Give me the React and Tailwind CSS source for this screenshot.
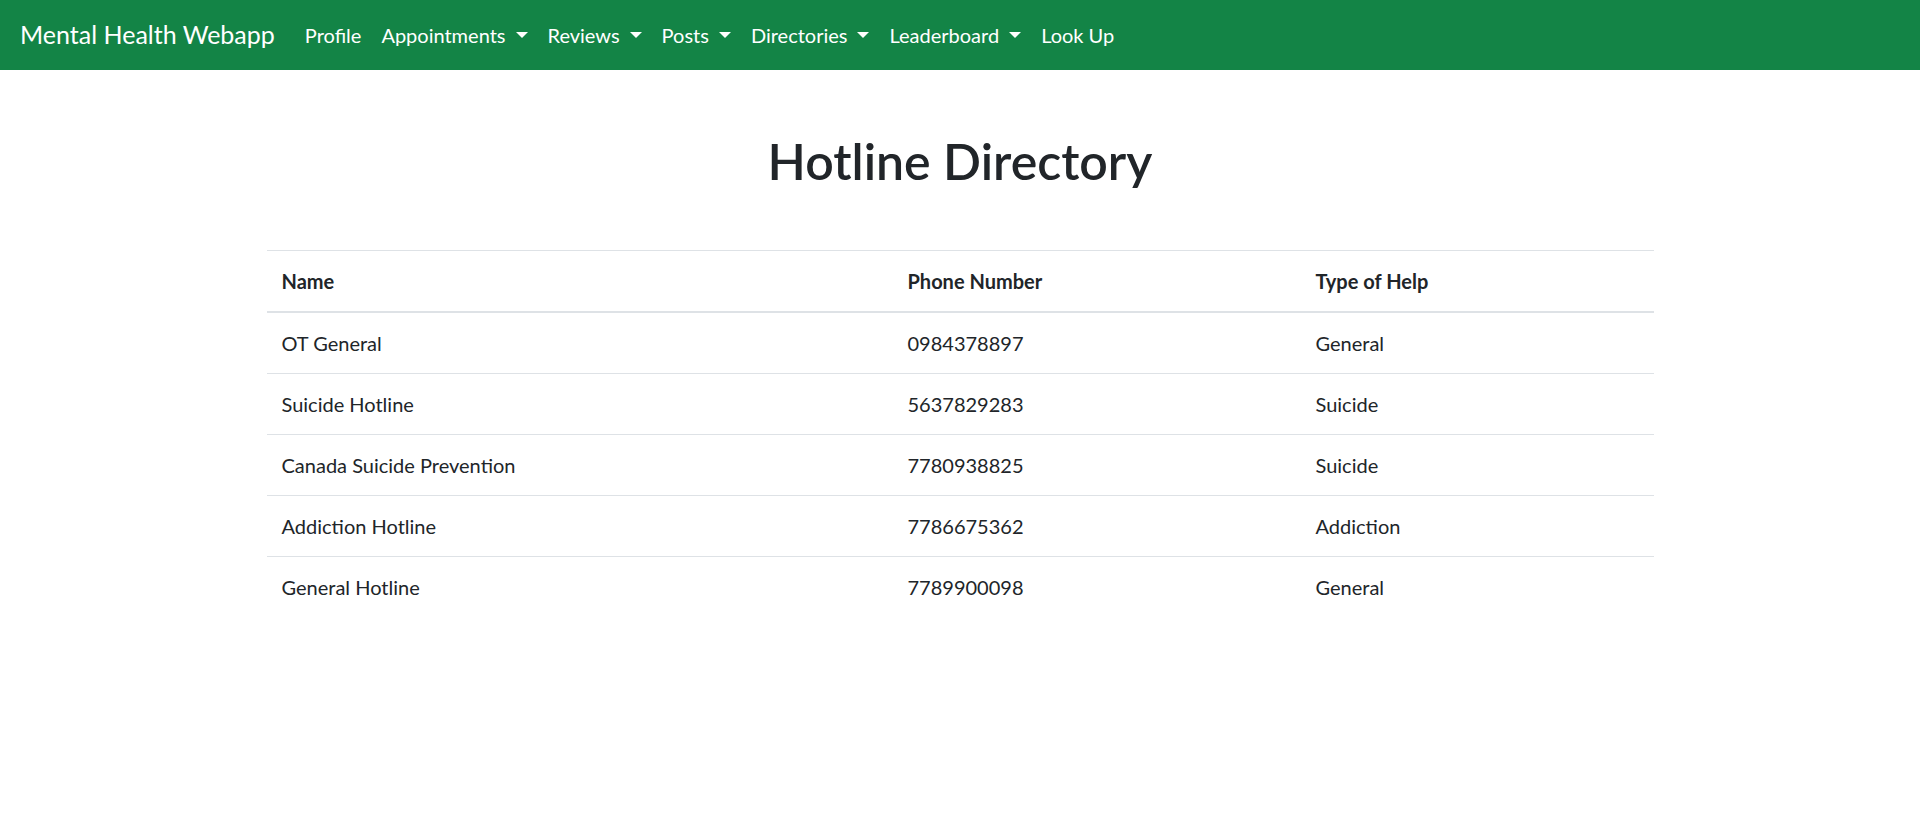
const navItems = [
  { label: "Profile", caret: false },
  { label: "Appointments", caret: true },
  { label: "Reviews", caret: true },
  { label: "Posts", caret: true },
  { label: "Directories", caret: true },
  { label: "Leaderboard", caret: true },
  { label: "Look Up", caret: false },
];

const hotlines = [
  { name: "OT General", phone: "0984378897", type: "General" },
  { name: "Suicide Hotline", phone: "5637829283", type: "Suicide" },
  { name: "Canada Suicide Prevention", phone: "7780938825", type: "Suicide" },
  { name: "Addiction Hotline", phone: "7786675362", type: "Addiction" },
  { name: "General Hotline", phone: "7789900098", type: "General" },
];

function Caret() {
  return (
    <span className="ml-[10px] inline-block align-[5px] border-t-[6px] border-x-[6px] border-t-white border-x-transparent" />
  );
}

export default function App() {
  return (
    <div className="min-h-screen bg-white text-[#212529] font-['Lato',sans-serif]">
      <nav className="flex items-center h-[70px] px-5 bg-[#138446]">
        <a href="#" className="mr-5 py-[6px] text-[25px] leading-[37.5px] text-white">
          Mental Health Webapp
        </a>
        <ul className="flex items-center">
          {navItems.map((item) => (
            <li key={item.label}>
              <a href="#" className="block px-[10px] py-2 text-[20px] leading-[30px] text-white">
                {item.label}
                {item.caret && <Caret />}
              </a>
            </li>
          ))}
        </ul>
      </nav>

      <div className="mx-auto w-[1425px] px-[19px] pt-[61px]">
        <h1 className="text-center text-[50px] leading-[60px] font-semibold mb-[59px]">
          Hotline Directory
        </h1>
        <table className="w-full border-collapse text-[20px] leading-[30px]">
          <thead>
            <tr className="border-t border-[#dee2e6]">
              <th className="w-[626px] px-[15px] py-[15px] text-left font-bold border-b-2 border-[#dee2e6]">Name</th>
              <th className="w-[408px] px-[15px] py-[15px] text-left font-bold border-b-2 border-[#dee2e6]">Phone Number</th>
              <th className="px-[15px] py-[15px] text-left font-bold border-b-2 border-[#dee2e6]">Type of Help</th>
            </tr>
          </thead>
          <tbody>
            {hotlines.map((h, i) => (
              <tr key={h.name} className={i > 0 ? "border-t border-[#dee2e6]" : ""}>
                <td className="px-[15px] py-[15px]">{h.name}</td>
                <td className="px-[15px] py-[15px]">{h.phone}</td>
                <td className="px-[15px] py-[15px]">{h.type}</td>
              </tr>
            ))}
          </tbody>
        </table>
      </div>
    </div>
  );
}
